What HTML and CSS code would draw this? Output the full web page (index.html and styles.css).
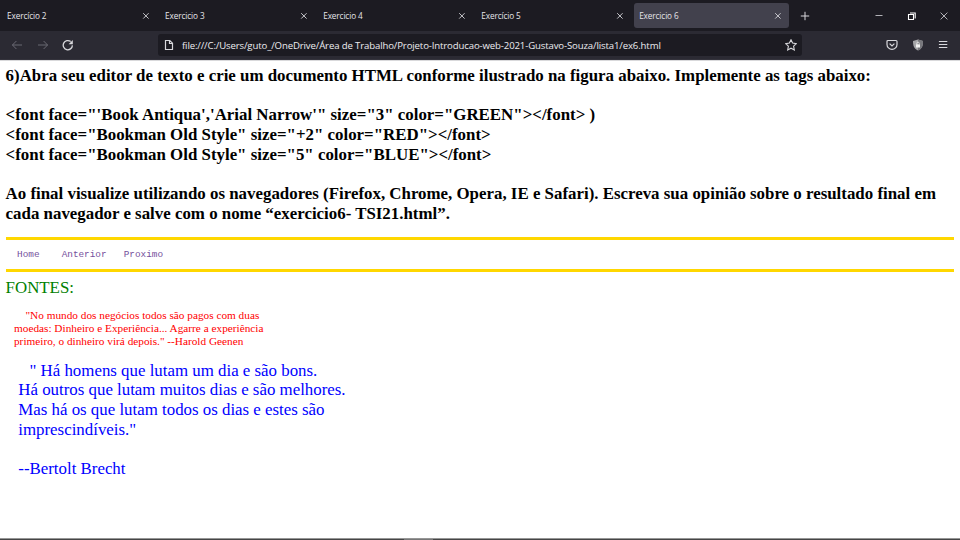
FILE: index.html
```html
<!DOCTYPE html>
<html lang="pt-BR">
<head>
<meta charset="utf-8">
<title>Exercicio 6</title>
<link rel="stylesheet" href="styles.css">
</head>
<body>
<div class="browser">
  <header class="tabbar">
    <div class="tab"><span>Exercício 2</span><svg class="close" viewBox="0 0 8 8"><path d="M1.2 1.2l5.4 5.4M6.6 1.2L1.2 6.6"/></svg></div>
    <div class="tab"><span>Exercicio 3</span><svg class="close" viewBox="0 0 8 8"><path d="M1.2 1.2l5.4 5.4M6.6 1.2L1.2 6.6"/></svg></div>
    <div class="tab"><span>Exercicio 4</span><svg class="close" viewBox="0 0 8 8"><path d="M1.2 1.2l5.4 5.4M6.6 1.2L1.2 6.6"/></svg></div>
    <div class="tab"><span>Exercício 5</span><svg class="close" viewBox="0 0 8 8"><path d="M1.2 1.2l5.4 5.4M6.6 1.2L1.2 6.6"/></svg></div>
    <div class="tab active"><span>Exercicio 6</span><svg class="close" viewBox="0 0 8 8"><path d="M1.2 1.2l5.4 5.4M6.6 1.2L1.2 6.6"/></svg></div>
    <svg class="new-tab" viewBox="0 0 10 10"><path d="M5 .8v8.4M.8 5h8.4"/></svg>
    <div class="window-buttons">
      <svg viewBox="0 0 10 10"><path d="M1.5 4.5h7"/></svg>
      <svg class="restore" viewBox="0 0 10 10"><path d="M1.5 3.5h5v5h-5zM3 2h5.2v5.400"/></svg>
      <svg viewBox="0 0 10 10"><path d="M1.6 1.6l6.8 6.8M8.4 1.6L1.6 8.4"/></svg>
    </div>
  </header>
  <div class="toolbar">
    <div class="nav-buttons">
      <svg class="dim" viewBox="0 0 12 12"><path d="M11 6H1.5M5.4 2L1.4 6l4 4"/></svg>
      <svg class="dim" viewBox="0 0 12 12"><path d="M1 6h9.5M6.6 2l4 4-4 4"/></svg>
      <svg class="reload" viewBox="0 0 12 12"><path d="M10.400 6.400A4.600 4.600 0 1 1 8.700 2.600"/><path class="solid" d="M10.800 1v4.200H6.600z"/></svg>
    </div>
    <div class="address">
      <svg class="page-icon" viewBox="0 0 10 12"><path d="M1.500 1.500h4.300l2.700 2.700v6.300h-7zM5.500 1.700v2.800h2.900"/></svg>
      <span class="url">file:///C:/Users/guto_/OneDrive/Área de Trabalho/Projeto-Introducao-web-2021-Gustavo-Souza/lista1/ex6.html</span>
      <svg class="star" viewBox="0 0 12 12"><path d="M6 .8l1.600 3.300 3.700.5-2.700 2.600.7 3.700L6 9.200l-3.300 1.700.7-3.700L.7 4.600l3.700-.5z"/></svg>
    </div>
    <div class="actions">
      <svg viewBox="0 0 12 12"><path d="M2 1.500h8q1 0 1 1v2.900a5 5 0 0 1-10 0V2.500q0-1 1-1zM3.600 4.600L6 6.900l2.400-2.300"/></svg>
      <svg class="shield" viewBox="0 0 12 12"><path class="left" d="M6 .4L11 2c0 5-1 7.700-5 9.600C2 9.700 1 7 1 2z"/><path class="right" d="M6 .4L11 2c0 5-1 7.700-5 9.600z"/><path class="lock" d="M4 5.300h4v3.200H4z"/><path class="shackle" d="M4.800 5.300V4.300a1.200 1.200 0 0 1 2.400 0v1"/></svg>
      <svg class="menu" viewBox="0 0 12 12"><path d="M1.900 2.500h8.400M1.900 5.500h8.400M1.900 8.500h8.400"/></svg>
    </div>
  </div>
  <main>
    <h1>6)Abra seu editor de texto e crie um documento HTML conforme ilustrado na figura abaixo. Implemente as tags abaixo:<br><br>&lt;font face="'Book Antiqua','Arial Narrow'" size="3" color="GREEN"&gt;&lt;/font&gt; )<br>&lt;font face="Bookman Old Style" size="+2" color="RED"&gt;&lt;/font&gt;<br>&lt;font face="Bookman Old Style" size="5" color="BLUE"&gt;&lt;/font&gt;<br><br>Ao final visualize utilizando os navegadores (Firefox, Chrome, Opera, IE e Safari). Escreva sua opinião sobre o resultado final em<br>cada navegador e salve com o nome “exercicio6- TSI21.html”.</h1>
    <nav><a>Home</a><a>Anterior</a><a>Proximo</a></nav>
    <p class="fonts">FONTES:</p>
    <p class="geenen">"No mundo dos negócios todos são pagos com duas<br>moedas: Dinheiro e Experiência... Agarre a experiência<br>primeiro, o dinheiro virá depois." --Harold Geenen</p>
    <p class="brecht">" Há homens que lutam um dia e são bons.<br>Há outros que lutam muitos dias e são melhores.<br>Mas há os que lutam todos os dias e estes são<br>imprescindíveis."<br><br>--Bertolt Brecht</p>
  </main>
  <footer class="taskbar"><span></span></footer>
</div>
</body>
</html>
```
FILE: styles.css
```css
* { box-sizing: border-box; }
body { margin: 0; background: #fff; }
svg { display: block; fill: none; stroke: #d8d8dc; stroke-width: 1; flex: none; }
.browser { width: 960px; height: 540px; display: flex; flex-direction: column; overflow: hidden; }

.tabbar { height: 31px; flex: none; display: flex; align-items: center; background: #1c1b22; color: #e6e6ea; font: 8.2px/12px "Open Sans", "Noto Sans", sans-serif; }
.tab { width: 155px; height: 25px; margin-right: 3.1px; padding: 1px 5px 0 7px; display: flex; align-items: center; justify-content: space-between; border-radius: 3px; white-space: nowrap; flex: none; }
.tab span { letter-spacing: -.1px; }
.tab:nth-child(5) { margin-left: 1.4px; padding-left: 5.4px; padding-right: 7px; }
.active { background: #42414d; }
.close { width: 8px; height: 8px; stroke-width: .9; }
.new-tab { width: 10px; height: 10px; margin-left: 8px; }
.window-buttons { margin-left: auto; margin-right: 11px; display: flex; gap: 22.5px; }
.window-buttons svg { width: 10px; height: 10px; stroke-width: .8; }
.window-buttons .restore { stroke: #fff; stroke-width: 1.1; }

.toolbar { height: 29px; flex: none; display: flex; align-items: center; background: #2b2a33; border-bottom: 1px solid #34333c; }
.nav-buttons { width: 158px; padding-left: 11px; display: flex; gap: 13.5px; }
.nav-buttons svg { width: 12px; height: 12px; }
.nav-buttons .dim { stroke: #716f79; stroke-width: .9; }
.reload { stroke-width: 1.3; }
.solid { fill: #d8d8dc; stroke: none; }
.address { width: 644px; height: 22px; padding: 0 5.5px 0 6px; display: flex; align-items: center; background: #1c1b22; border-radius: 3px; }
.page-icon { width: 10px; height: 12px; stroke-width: 1.2; }
.url { margin-left: 8px; padding-top: 1px; color: #ececf0; font: 9.6px/14px "Open Sans", "Noto Sans", sans-serif; white-space: nowrap; letter-spacing: -.13px; }
.star { width: 12px; height: 12px; margin-left: auto; stroke-width: 1.1; }
.actions { margin-left: auto; margin-right: 11px; display: flex; gap: 13.3px; }
.actions svg { width: 12px; height: 12px; stroke-width: 1.2; }
.actions .menu { stroke-width: 1; }
.shield .left { fill: #a5a5a8; stroke: none; }
.shield .right { fill: #77777c; stroke: none; }
.shield .lock { fill: #f2f2f2; stroke: none; }
.shield .shackle { stroke: #eee; stroke-width: .8; }

main { flex: 1; min-height: 0; padding: 5px 5.6px 0; border-top: 1px solid #d9d9db; font-family: "Liberation Serif", serif; background: #fff; }
h1, p { margin: 0; white-space: nowrap; }
h1 { font-size: 16.88px; line-height: 19.68px; height: 171px; color: #000; letter-spacing: .006px; }
nav { height: 35px; border-top: 3px solid #ffd700; border-bottom: 3px solid #ffd700; padding: 0 11.5px; display: flex; align-items: center; gap: 17.1px; font: 9.37px/12px "Liberation Mono", monospace; color: #75509c; }
nav a:first-child { margin-right: 5px; }
.fonts { margin-top: 6px; font-size: 16.87px; line-height: 20px; color: #008000; }
.geenen { margin: 11.4px 0 0 8.4px; font-size: 11.26px; line-height: 12.7px; color: #f00; text-indent: 11.5px; letter-spacing: .01px; }
.brecht { margin: 13px 0 0 12.7px; font-size: 16.87px; line-height: 19.68px; color: #00f; text-indent: 11.2px; }
.taskbar { height: 2px; flex: none; background: #454545; border-top: 1px solid #969696; }
.taskbar span { display: block; width: 29px; height: 1px; margin-left: 404px; background: #777; }
```
